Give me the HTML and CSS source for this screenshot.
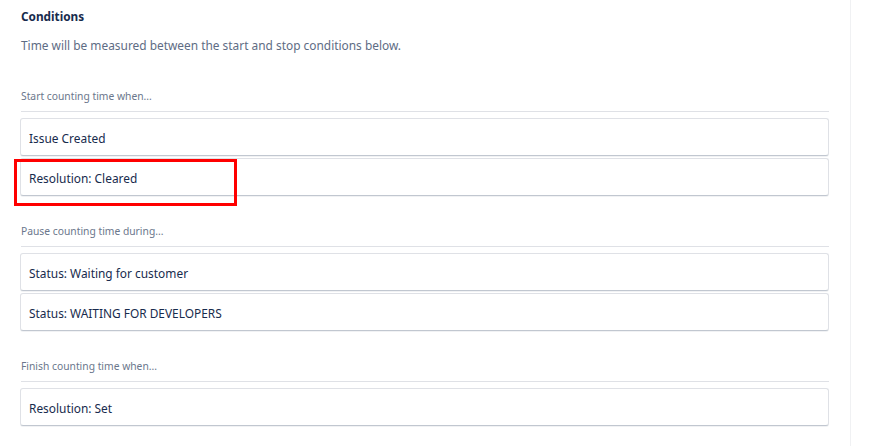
FILE: index.html
```html
<!DOCTYPE html>
<html>
<head>
<meta charset="utf-8">
<link rel="stylesheet" href="styles.css">
</head>
<body>
<div class="page">
  <main class="main">
    <h2 class="title">Conditions</h2>
    <p class="desc">Time will be measured between the start and stop conditions below.</p>

    <section class="group first">
      <div class="label">Start counting time when...</div>
      <div class="list">
        <div class="card">Issue Created</div>
        <div class="card highlighted">Resolution: Cleared</div>
      </div>
    </section>

    <section class="group">
      <div class="label">Pause counting time during...</div>
      <div class="list">
        <div class="card">Status: Waiting for customer</div>
        <div class="card">Status: WAITING FOR DEVELOPERS</div>
      </div>
    </section>

    <section class="group">
      <div class="label">Finish counting time when...</div>
      <div class="list">
        <div class="card">Resolution: Set</div>
      </div>
    </section>
  </main>
  <aside class="side"></aside>
</div>
</body>
</html>
```

FILE: styles.css
```css
* { box-sizing: border-box; }
html, body { margin: 0; padding: 0; background: #fff; }
body {
  font-family: "Noto Sans", "Open Sans", sans-serif;
  color: #172b4d;
  width: 870px;
  height: 446px;
  overflow: hidden;
}
.page {
  display: flex;
  height: 446px;
}
.main {
  width: 850px;
  padding: 6px 21px 0 20px;
}
.side {
  flex: 1;
  border-left: 1px solid #f0f1f3;
}
.title {
  margin: 0 0 0 1px;
  font-size: 11.8px;
  font-weight: 700;
  line-height: 20px;
  color: #172b4d;
}
.desc {
  margin: 9px 0 0 1px;
  font-size: 11.9px;
  line-height: 20px;
  color: #5e6c84;
}
.group { margin-top: 27px; }
.group.first { margin-top: 33px; }
.label {
  margin-left: 1px;
  font-size: 10.3px;
  line-height: 16px;
  color: #6b778c;
  padding-bottom: 7px;
  border-bottom: 1px solid #dfe1e6;
}
.list {
  display: flex;
  flex-direction: column;
  gap: 2px;
  margin-top: 6px;
}
.card {
  position: relative;
  height: 38px;
  display: flex;
  align-items: center;
  padding: 1px 0 0 8px;
  font-size: 11.9px;
  color: #172b4d;
  background: #fff;
  border: 1px solid #dfe1e6;
  border-bottom-color: #c1c7d0;
  border-radius: 3px;
  box-shadow: 0 1px 0 rgba(9,30,66,0.06);
}
.highlighted::after {
  content: "";
  position: absolute;
  left: -7px;
  top: 0px;
  width: 217px;
  height: 41px;
  border: 3px solid #ff0000;
}
```
